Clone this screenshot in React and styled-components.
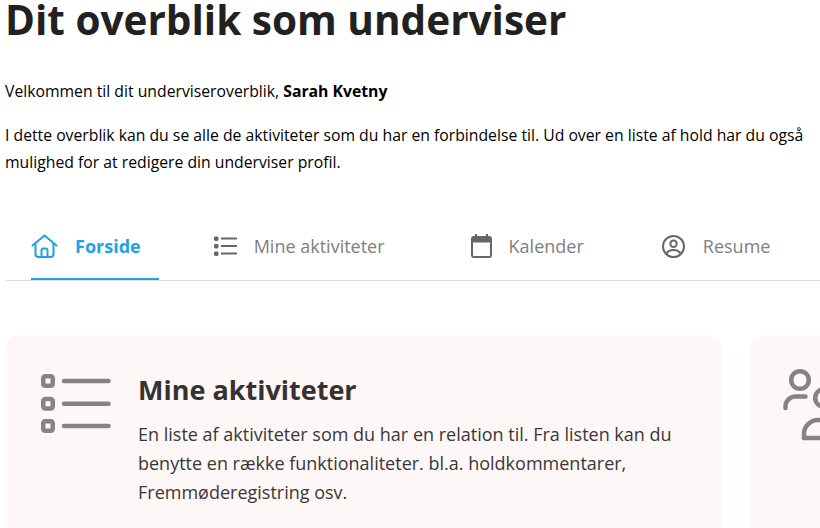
import React from 'react';
import styled, { createGlobalStyle } from 'styled-components';

const GlobalStyle = createGlobalStyle`
  html, body {
    margin: 0;
    padding: 0;
    background: #ffffff;
    overflow: hidden;
  }
  body {
    font-family: 'Open Sans', 'Liberation Sans', sans-serif;
    color: #000000;
  }
`;

const Page = styled.div`
  width: 820px;
  height: 528px;
  padding-left: 5px;
  box-sizing: border-box;
  overflow: hidden;
`;

const Title = styled.h1`
  margin: 0;
  font-size: 40.5px;
  line-height: 40px;
  font-weight: 700;
  color: #212121;
  white-space: nowrap;
`;

const Intro = styled.p`
  margin: ${props => props.$top}px 0 0;
  width: 812px;
  font-size: 15.75px;
  line-height: 27px;
  color: #000000;
`;

const Tabs = styled.nav`
  display: flex;
  margin-top: 38px;
  padding-left: 26px;
  height: 66px;
  border-bottom: 1px solid #dddddd;
`;

const Tab = styled.a`
  display: flex;
  align-items: center;
  height: 66px;
  padding: 0 18px 2px 0;
  margin-right: ${props => props.$gap}px;
  box-sizing: border-box;
  font-size: 18px;
  font-weight: ${props => (props.$active ? 700 : 400)};
  color: ${props => (props.$active ? '#1ea1e8' : '#808080')};
  border-bottom: 2px solid ${props => (props.$active ? '#1ea1e8' : 'transparent')};
  border-top: 2px solid transparent;
  white-space: nowrap;
  svg {
    flex: none;
    margin-right: ${props => props.$iconGap}px;
  }
`;

const Cards = styled.div`
  display: flex;
  gap: 28px;
  margin-top: 54px;
  width: 1500px;
`;

const Card = styled.section`
  display: flex;
  flex: none;
  width: 717px;
  height: 260px;
  box-sizing: border-box;
  padding: 33px 0 0 ${props => props.$left}px;
  border-radius: 14px;
  background: #fdf7f7;
`;

const CardIcon = styled.div`
  flex: none;
  width: 97px;
  padding-top: ${props => props.$top}px;
`;

const CardBody = styled.div`
  width: 545px;
  padding-top: 4px;
`;

const CardTitle = styled.h2`
  margin: 0;
  font-size: 27px;
  line-height: 36px;
  font-weight: 700;
  color: #373232;
`;

const CardText = styled.p`
  margin: 12px 0 0;
  font-size: 18px;
  line-height: 29px;
  color: #3a3737;
`;

const HomeIcon = () => (
  <svg width="27" height="24" viewBox="0 0 27 24" fill="none" stroke="#1ea1e8" strokeWidth="2" strokeLinejoin="round" strokeLinecap="round">
    <path d="M1.500 11.500 13.500 1.500l12 10" />
    <path d="M4.500 9.500V20a3 3 0 0 0 3 3h12a3 3 0 0 0 3-3V9.500" />
    <path d="M10.500 23v-6.500a2 2 0 0 1 2-2h2a2 2 0 0 1 2 2V23" />
  </svg>
);

const ListIcon = () => (
  <svg width="23" height="20" viewBox="0 0 23 20" fill="#666666">
    <rect x="0" y="0.500" width="4.500" height="4.500" rx="1.400" />
    <rect x="0" y="8" width="4.500" height="4.500" rx="1.400" />
    <rect x="0" y="15.500" width="4.500" height="4.500" rx="1.400" />
    <rect x="7" y="1.500" width="16" height="2" />
    <rect x="7" y="9" width="16" height="2" />
    <rect x="7" y="16.500" width="16" height="2" />
  </svg>
);

const CalendarIcon = () => (
  <svg width="21" height="24" viewBox="0 0 21 24" fill="#666666">
    <rect x="4" y="0" width="2" height="4" />
    <rect x="15" y="0" width="2" height="4" />
    <path fillRule="evenodd" d="M3 2h15a3 3 0 0 1 3 3v16a3 3 0 0 1-3 3H3a3 3 0 0 1-3-3V5a3 3 0 0 1 3-3Zm-1 6.500V21a1 1 0 0 0 1 1h15a1 1 0 0 0 1-1V8.500Z" />
  </svg>
);

const ProfileIcon = () => (
  <svg width="23" height="23" viewBox="0 0 23 23" fill="none" stroke="#666666" strokeWidth="2">
    <circle cx="11.500" cy="11.500" r="10.500" />
    <circle cx="11.500" cy="8.800" r="3.200" />
    <path d="M4.500 18.500c1.500-2.500 4-3.500 7-3.500s5.500 1 7 3.500" />
  </svg>
);

const BigListIcon = () => (
  <svg width="70" height="59" viewBox="0 0 70 59" fill="none" stroke="#868380" strokeWidth="4.500">
    <rect x="2.250" y="2.250" width="9.500" height="9.500" rx="2" />
    <rect x="2.250" y="25" width="9.500" height="9.500" rx="2" />
    <rect x="2.250" y="47.250" width="9.500" height="9.500" rx="2" />
    <g strokeLinecap="round">
      <path d="M23 7h44.500" />
      <path d="M23 29.700h44.500" />
      <path d="M23 52h44.500" />
    </g>
  </svg>
);

const PeopleIcon = () => (
  <svg width="70" height="74" viewBox="0 0 70 74" fill="none" stroke="#868380" strokeWidth="4.500" strokeLinecap="round">
    <circle cx="17" cy="12" r="8.800" />
    <path d="M2.500 40v-1.500a10 10 0 0 1 10-10h10" />
    <circle cx="41" cy="30" r="8.800" />
    <path d="M21 70v-4a14 14 0 0 1 14-14h20" />
    <path d="M21 70h40" />
  </svg>
);

export default function App() {
  return (
    <Page>
      <GlobalStyle />
      <Title>Dit overblik som underviser</Title>
      <Intro $top={38}>
        Velkommen til dit underviseroverblik, <strong>Sarah Kvetny</strong>
      </Intro>
      <Intro $top={17}>
        I dette overblik kan du se alle de aktiviteter som du har en forbindelse til. Ud over en liste af hold har du også mulighed for at redigere din underviser profil.
      </Intro>
      <Tabs>
        <Tab $active $gap={55} $iconGap={17}><HomeIcon />Forside</Tab>
        <Tab $gap={68} $iconGap={17}><ListIcon />Mine aktiviteter</Tab>
        <Tab $gap={60} $iconGap={17}><CalendarIcon />Kalender</Tab>
        <Tab $gap={0} $iconGap={18}><ProfileIcon />Resume</Tab>
      </Tabs>
      <Cards>
        <Card $left={36}>
          <CardIcon $top={6}><BigListIcon /></CardIcon>
          <CardBody>
            <CardTitle>Mine aktiviteter</CardTitle>
            <CardText>
              En liste af aktiviteter som du har en relation til. Fra listen kan du benytte en række funktionaliteter. bl.a. holdkommentarer, Fremmøderegistring osv.
            </CardText>
          </CardBody>
        </Card>
        <Card $left={33}>
          <CardIcon $top={0}><PeopleIcon /></CardIcon>
        </Card>
      </Cards>
    </Page>
  );
}
